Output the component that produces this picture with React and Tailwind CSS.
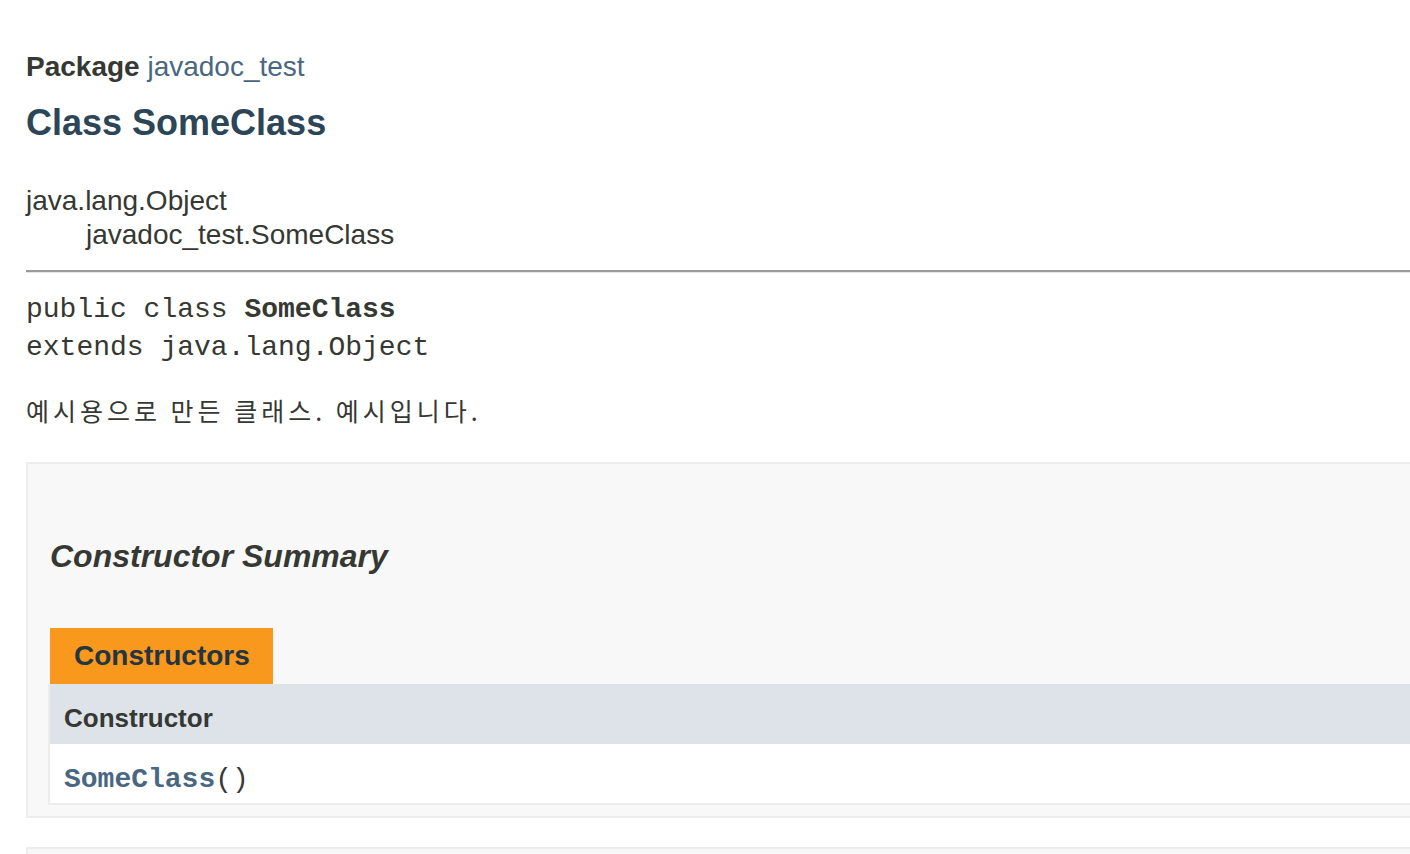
import React from 'react'

const sans = { fontFamily: '"Liberation Sans", Arial, "Noto Sans CJK KR", sans-serif' }
const mono = { fontFamily: '"Liberation Mono", "Courier New", monospace' }
const kr = { fontFamily: '"Noto Sans CJK KR", "Liberation Sans", sans-serif' }

const ConstructorSummary = () => (
  <section className="mt-[34px] border-2 border-[#ededed] bg-[#f8f8f8] pb-[11px] pl-[22px] pt-[74px]">
    <h3 className="text-[32px] font-bold italic leading-[36px] text-[#353833]">
      Constructor Summary
    </h3>
    <div className="mt-[54px]">
      <div className="inline-block h-[56px] bg-[#f8981d] pl-[24px] pr-[23px] text-[28px] font-bold leading-[56px] text-[#253441]">
        Constructors
      </div>
      <div className="-ml-[2px] border-b-2 border-l-2 border-[#ededed]">
        <div className="h-[60px] bg-[#dee3e9] pl-[14px] pt-[18px] text-[26px] font-bold leading-[32px] text-[#353833]">
          Constructor
        </div>
        <div className="h-[59px] bg-white pl-[14px] pt-[20px] text-[28px] leading-[32px]" style={mono}>
          <a className="font-bold text-[#4a6782]">SomeClass</a>
          <span className="text-[#353833]">()</span>
        </div>
      </div>
    </div>
  </section>
)

export default function App() {
  return (
    <div className="h-[854px] w-full overflow-hidden bg-white text-[#353833]" style={sans}>
      <main className="w-[1520px] pl-[26px] pt-[51px]">
        {/* header */}
        <div className="text-[28px] leading-[32px]">
          <span className="font-bold">Package</span>{' '}
          <a className="text-[#4a6782]">javadoc_test</a>
        </div>
        <h1 className="mt-[20px] text-[36px] font-bold leading-[40px] text-[#2c4557]">
          Class SomeClass
        </h1>

        {/* inheritance */}
        <div className="mt-[41px] text-[28px] leading-[34px]">
          <div>java.lang.Object</div>
          <div className="ml-[60px]">javadoc_test.SomeClass</div>
        </div>

        <div className="mt-[18px] h-[2px] bg-[#9b9b9b]" />
        <div className="h-[1px] bg-[#e6e6e6]" />

        <pre className="mt-[18px] text-[28px] leading-[38px] text-[#353833]" style={mono}>
          public class <span className="font-bold">SomeClass</span>
          {'\n'}extends java.lang.Object
        </pre>

        <p className="mt-[25px] text-[25px] leading-[36px] tracking-[4px] text-[#353833]" style={kr}>
          예시용으로 만든 클래스. 예시입니다.
        </p>

        <ConstructorSummary />

        <section className="mt-[29px] h-[40px] border-2 border-[#ededed] bg-[#f8f8f8]" />
      </main>
    </div>
  )
}
